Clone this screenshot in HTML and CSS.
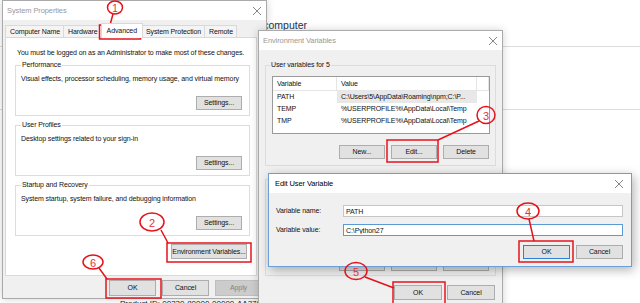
FILE: index.html
```html
<!DOCTYPE html>
<html lang="en">
<head>
  <meta charset="UTF-8">
  <meta name="viewport" content="width=device-width, initial-scale=1.0">
  <title>System Properties - Environment Variables</title>
  <link rel="stylesheet" href="styles.css">
</head>
<body>
  <div class="desktop">
    <!-- control panel page behind the dialogs -->
    <div class="bg-page">
      <h1 class="bg-title">View basic information about your computer</h1>
      <div class="bg-rule"></div>
      <div class="bg-rule second"></div>
      <p class="bg-foot">Product ID: 00330-80000-00000-AA378</p>
    </div>

    <!-- System Properties -->
    <div class="win sysprops">
      <div class="titlebar">
        <span>System Properties</span>
        <svg class="close" width="8" height="8" viewBox="0 0 8 8"><path d="M0 0L8 8M8 0L0 8"/></svg>
      </div>
      <div class="win-body">
        <div class="tabs">
          <div class="tab">Computer Name</div>
          <div class="tab">Hardware</div>
          <div class="tab active">Advanced</div>
          <div class="tab">System Protection</div>
          <div class="tab">Remote</div>
        </div>
        <div class="tab-panel">
          <p class="note">You must be logged on as an Administrator to make most of these changes.</p>
          <fieldset class="group">
            <legend>Performance</legend>
            <p>Visual effects, processor scheduling, memory usage, and virtual memory</p>
            <div class="btn-row"><button class="btn">Settings...</button></div>
          </fieldset>
          <fieldset class="group">
            <legend>User Profiles</legend>
            <p>Desktop settings related to your sign-in</p>
            <div class="btn-row"><button class="btn">Settings...</button></div>
          </fieldset>
          <fieldset class="group">
            <legend>Startup and Recovery</legend>
            <p>System startup, system failure, and debugging information</p>
            <div class="btn-row"><button class="btn">Settings...</button></div>
          </fieldset>
          <div class="btn-row env-row"><button class="btn wide">Environment Variables...</button></div>
        </div>
        <div class="btn-row dialog-row">
          <button class="btn">OK</button>
          <button class="btn">Cancel</button>
          <button class="btn" disabled>Apply</button>
        </div>
      </div>
    </div>

    <!-- Environment Variables -->
    <div class="win envvars">
      <div class="titlebar">
        <span>Environment Variables</span>
        <svg class="close" width="8" height="8" viewBox="0 0 8 8"><path d="M0 0L8 8M8 0L0 8"/></svg>
      </div>
      <div class="win-body">
        <fieldset class="group vars">
          <legend>User variables for 5</legend>
          <div class="list">
            <div class="list-row head">
              <span>Variable</span><span>Value</span><span></span>
            </div>
            <div class="list-row selected">
              <span>PATH</span><span>C:\Users\5\AppData\Roaming\npm;C:\P...</span><span></span>
            </div>
            <div class="list-row">
              <span>TEMP</span><span>%USERPROFILE%\AppData\Local\Temp</span><span></span>
            </div>
            <div class="list-row">
              <span>TMP</span><span>%USERPROFILE%\AppData\Local\Temp</span><span></span>
            </div>
          </div>
          <div class="btn-row">
            <button class="btn">New...</button>
            <button class="btn">Edit...</button>
            <button class="btn">Delete</button>
          </div>
        </fieldset>
        <fieldset class="group vars system">
          <legend>System variables</legend>
          <div class="list"></div>
          <div class="btn-row">
            <button class="btn">New...</button>
            <button class="btn">Edit...</button>
            <button class="btn">Delete</button>
          </div>
        </fieldset>
        <div class="btn-row dialog-row">
          <button class="btn">OK</button>
          <button class="btn">Cancel</button>
        </div>
      </div>
    </div>

    <!-- Edit User Variable -->
    <div class="win editvar">
      <div class="titlebar active">
        <span>Edit User Variable</span>
        <svg class="close" width="8" height="8" viewBox="0 0 8 8"><path d="M0 0L8 8M8 0L0 8"/></svg>
      </div>
      <div class="win-body">
        <div class="field">
          <label for="var-name">Variable name:</label>
          <input type="text" id="var-name" value="PATH">
        </div>
        <div class="field">
          <label for="var-value">Variable value:</label>
          <input type="text" id="var-value" class="focused" value="C:\Python27">
        </div>
        <div class="btn-row">
          <button class="btn default">OK</button>
          <button class="btn">Cancel</button>
        </div>
      </div>
    </div>

    <!-- red step annotations drawn over the screenshot -->
    <svg class="marks" width="640" height="303" viewBox="0 0 640 303">
      <g class="mark-lines">
        <rect x="99.5" y="25" width="41" height="14"/>
        <rect x="167" y="243" width="84" height="19"/>
        <rect x="387" y="140" width="51" height="22"/>
        <rect x="519" y="241" width="54" height="21"/>
        <rect x="393" y="282" width="52" height="22"/>
        <rect x="106" y="279" width="55" height="19"/>

        <ellipse cx="115" cy="7.5" rx="7.5" ry="6.5"/>
        <ellipse cx="152" cy="222" rx="12" ry="9"/>
        <ellipse cx="486" cy="115" rx="9" ry="8.5"/>
        <ellipse cx="528" cy="211" rx="11" ry="8"/>
        <ellipse cx="356" cy="271" rx="11" ry="8.5"/>
        <ellipse cx="93" cy="262" rx="10" ry="7"/>

        <path d="M113 14L110 25M161 230L168 243M479 121L438 140M529 219L534 241M365 277L394 288M99 268L107 279"/>
      </g>
      <g class="mark-nums">
        <text x="115" y="8" class="small">1</text>
        <text x="152" y="222.5">2</text>
        <text x="486" y="115.5">3</text>
        <text x="528" y="211.5">4</text>
        <text x="356" y="271.5">5</text>
        <text x="93" y="262.5">6</text>
      </g>
    </svg>
  </div>
</body>
</html>
```

FILE: styles.css
```css
* {
  box-sizing: border-box;
}

body {
  margin: 0;
  font-family: "Liberation Sans", Arial, sans-serif;
}

.desktop {
  position: relative;
  width: 640px;
  height: 303px;
  overflow: hidden;
  background: #fff;
}

/* page behind */
.bg-page {
  display: flex;
  flex-direction: column;
}

.bg-title {
  margin: 19px 0 0;
  width: 307px;
  text-align: right;
  font-size: 10.5px;
  font-weight: normal;
  line-height: 12px;
  color: #1e3250;
  white-space: nowrap;
}

.bg-rule {
  height: 1px;
  background: #dcdcdc;
  margin-top: 15px;
}

.bg-rule.second {
  margin-top: 62px;
}

.bg-foot {
  margin: 189px 0 0 120px;
  font-size: 8px;
  line-height: 10px;
  color: #222;
}

/* windows */
.win {
  position: absolute;
  display: flex;
  flex-direction: column;
  background: #f0f0f0;
  border: 1px solid #aaa;
  font-size: 7px;
  letter-spacing: -0.1px;
  line-height: 10px;
  color: #111;
  box-shadow: 0 0 8px rgba(0, 0, 0, 0.18);
}

.titlebar {
  flex: none;
  height: 19px;
  background: #fff;
  display: flex;
  align-items: center;
  justify-content: space-between;
  padding: 0 5px 0 4px;
  font-size: 7.5px;
  color: #999;
}

.titlebar.active {
  color: #000;
}

.close {
  stroke: #777;
  stroke-width: 0.9;
  fill: none;
}

.win-body {
  flex: 1;
  display: flex;
  flex-direction: column;
}

p {
  margin: 0;
}

.btn-row {
  display: flex;
  justify-content: flex-end;
  gap: 6px;
  margin-top: 12px;
}

.btn {
  flex: none;
  width: 46px;
  height: 14px;
  padding: 0;
  border: 1px solid #adadad;
  background: #e1e1e1;
  font: inherit;
  letter-spacing: inherit;
  line-height: 12px;
  color: #111;
  white-space: nowrap;
}

.btn:disabled {
  background: #cccccc;
  border-color: #bfbfbf;
  color: #838383;
}

.btn.default {
  border-color: #2f7fd4;
}

.group {
  min-width: 0;
  border: 1px solid #dcdcdc;
}

.group legend {
  padding: 0 1px;
  line-height: 10px;
}

/* System Properties */
.sysprops {
  left: 2px;
  top: 0;
  width: 265px;
  height: 299px;
}

.sysprops .win-body {
  padding: 3px 0 0 2px;
}

.tabs {
  display: flex;
  align-items: flex-end;
  height: 14px;
}

.tab {
  height: 12px;
  padding: 0 3px 0 4px;
  border: 1px solid #d9d9d9;
  border-bottom: none;
  border-left: none;
  background: #f4f4f4;
  line-height: 11px;
  white-space: nowrap;
}

.tab:first-child {
  border-left: 1px solid #d9d9d9;
}

.tab.active {
  position: relative;
  z-index: 1;
  height: 15px;
  margin: 0 -1px -1px -1px;
  padding: 0 5px;
  border-left: 1px solid #d9d9d9;
  background: #fff;
  line-height: 13px;
}

.tab-panel {
  height: 239px;
  width: 252px;
  background: #fff;
  border: 1px solid #d9d9d9;
  display: flex;
  flex-direction: column;
}

.note {
  margin: 10px 0 0 11px;
  white-space: nowrap;
}

.tab-panel .group {
  margin: 4px 6px 0 9px;
  padding: 0 7px 5px 5px;
}

.tab-panel .group:first-of-type {
  margin-top: 2px;
}

.tab-panel .group p {
  margin-top: 4px;
  white-space: nowrap;
}

.env-row {
  margin: 8px 9px 0 0;
}

.btn.wide {
  width: 76px;
  height: 15px;
}

.dialog-row {
  margin-top: 4px;
  padding-right: 4px;
}

.sysprops .dialog-row .btn {
  width: 47px;
  height: 16px;
  line-height: 14px;
}

/* Environment Variables */
.envvars {
  left: 258px;
  top: 30px;
  width: 245px;
  height: 290px;
}

.envvars .win-body {
  padding: 0 6px;
}

.vars {
  margin: 10px 0 0;
  padding: 0 6px 6px 6px;
}

.vars legend {
  margin-left: -2px;
}

.vars .btn-row {
  margin-top: 11px;
}

.vars.system {
  margin-top: 8px;
  padding-bottom: 4px;
}

.list {
  margin: 6px -1px 0 0;
  height: 58px;
  background: #fff;
  border: 1px solid #9a9a9a;
}

.system .list {
  height: 56px;
}

.list-row {
  display: grid;
  grid-template-columns: 64px 140px 1fr;
  height: 12px;
  line-height: 12px;
}

.list-row span {
  padding-left: 4px;
  white-space: nowrap;
  overflow: hidden;
}

.list-row.head {
  height: 14px;
  line-height: 14px;
  border-bottom: 1px solid #e5e5e5;
}

.list-row.head span {
  border-right: 1px solid #e5e5e5;
}

.list-row.selected span:nth-child(2) {
  background: #e8e8e8;
}

.envvars .dialog-row {
  margin-top: 9px;
  gap: 5px;
  padding-right: 1px;
}

.envvars .dialog-row .btn {
  width: 48px;
  height: 15px;
  line-height: 13px;
}

/* Edit User Variable */
.editvar {
  left: 268px;
  top: 173px;
  width: 364px;
  height: 94px;
  border-color: #6a9fd8;
  box-shadow: 2px 3px 10px rgba(0, 0, 0, 0.3);
}

.editvar .titlebar {
  padding: 0 8px 0 6px;
}

.editvar .win-body {
  padding: 12px 8px 0 7px;
}

.field {
  display: flex;
  align-items: center;
}

.field + .field {
  margin-top: 7px;
}

.field label {
  flex: none;
  width: 67px;
}

.field input {
  flex: 1;
  min-width: 0;
  height: 12px;
  padding: 0 2px;
  border: 1px solid #c6c6c6;
  background: #fff;
  font: inherit;
  letter-spacing: inherit;
  color: #111;
  outline: none;
}

.field input.focused {
  border-color: #5b9bd5;
}

.editvar .btn-row {
  margin-top: 9px;
}

.editvar .btn {
  width: 47px;
}

/* annotations */
.marks {
  position: absolute;
  left: 0;
  top: 0;
  pointer-events: none;
}

.mark-lines {
  fill: none;
  stroke: #e4131b;
  stroke-width: 1.5;
}

.mark-nums text {
  fill: #e8303a;
  font-family: "Liberation Sans", Arial, sans-serif;
  font-size: 11px;
  text-anchor: middle;
  dominant-baseline: central;
}

.mark-nums text.small {
  font-size: 10px;
}
```
